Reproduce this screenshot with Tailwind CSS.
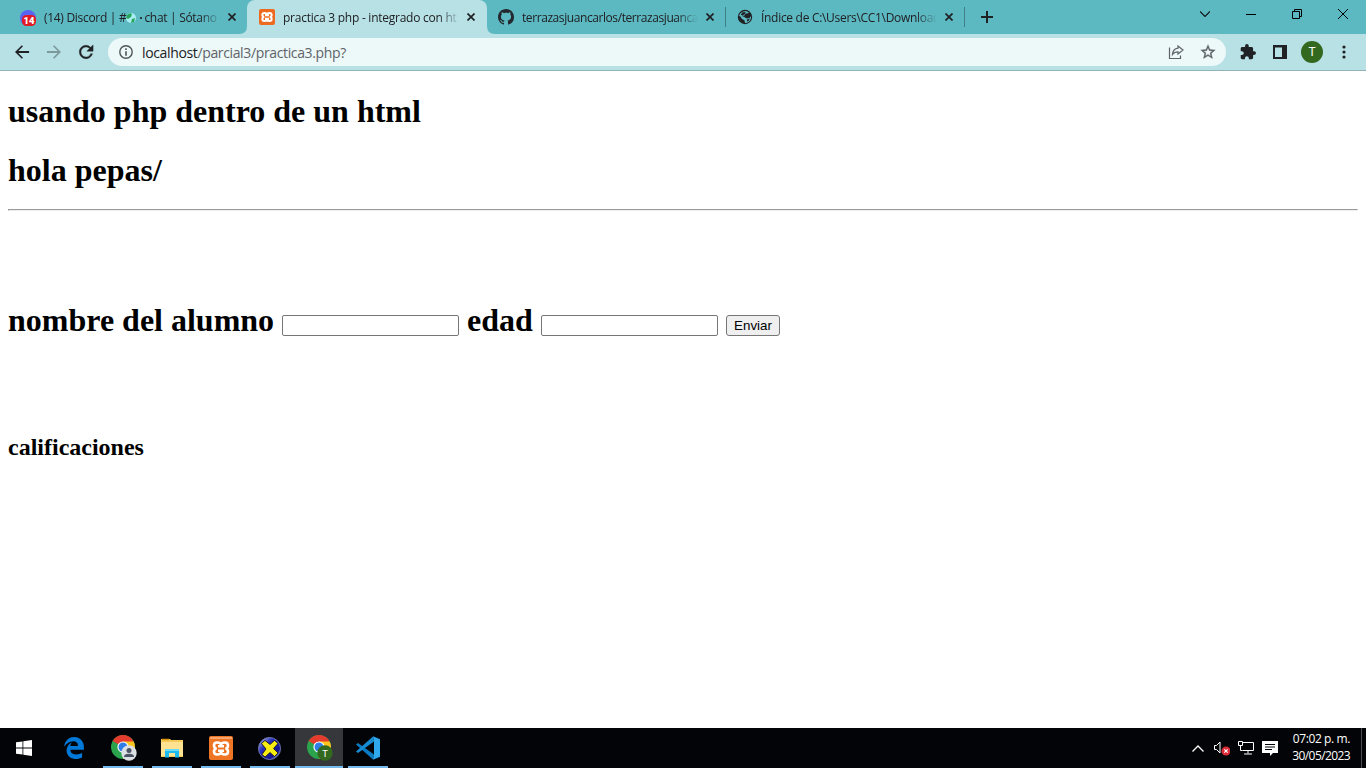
<!DOCTYPE html>
<html lang="es">
<head>
<meta charset="utf-8">
<title>practica 3 php - integrado con html</title>
<script src="https://cdn.jsdelivr.net/npm/@tailwindcss/browser@4"></script>
</head>
<body class="w-[1366px] h-[768px] overflow-hidden flex flex-col bg-white font-['Open_Sans',sans-serif] text-[#202124]">
<!-- tab strip -->
<header class="h-[34px] shrink-0 bg-[#5cb8c1] flex items-start text-[12px]">
  <div class="w-[247px] h-[34px] pl-5 flex items-center relative">
    <svg class="size-4 shrink-0 mt-px" viewBox="0 0 16 16"><circle cx="8" cy="8" r="8" fill="#5865f2"/><rect x="2" y="5" width="14" height="11" rx="4.500" fill="#e01b24"/><text x="9" y="14" font-family="Roboto" font-weight="900" font-size="9.500" text-anchor="middle" fill="#fff">14</text></svg>
    <div class="ml-2 pt-px w-[177px] overflow-hidden whitespace-nowrap tracking-[-0.3px] [mask-image:linear-gradient(to_right,#000_88%,transparent)]">(14) Discord | #<svg class="inline size-[10px] mr-px align-[-1px]" viewBox="0 0 10 10"><circle cx="5" cy="5" r="5" fill="#a9eef2"/><path d="M1 2Q4-1 6 1L5 4 2 6 0 5ZM6 6l3-1-1 4-3 1Z" fill="#26a65b"/></svg><span class="inline-block w-[7px] text-center font-bold">·</span>chat | Sótano d</div>
    <svg class="size-2 ml-[7px] shrink-0" viewBox="0 0 8 8"><path d="M.5.5l7 7M7.500.5l-7 7" stroke="#202124" stroke-width="1.7"/></svg>
  </div>
  <div class="w-[240px] h-[34px] pl-3 flex items-center bg-[#b7e1e5] rounded-t-[8px] relative">
    <svg class="absolute -left-2 bottom-0 size-2" viewBox="0 0 8 8"><path d="M8 0v8H0Q8 8 8 0" fill="#b7e1e5"/></svg>
    <svg class="absolute -right-2 bottom-0 size-2" viewBox="0 0 8 8"><path d="M0 0v8h8Q0 8 0 0" fill="#b7e1e5"/></svg>
    <svg class="size-4 shrink-0" viewBox="0 0 24 24"><rect width="24" height="24" rx="3" fill="#ec6b20"/><path d="M8 6Q12 6 12 9 12 6 16 6 19 6 19 9 19 12 16 12 19 12 19 15 19 18 16 18 12 18 12 15 12 18 8 18 5 18 5 15 5 12 8 12 5 12 5 9 5 6 8 6ZM9 9.500H15M9 14.500H15" fill="none" stroke="#fff" stroke-width="2.900"/></svg>
    <div class="ml-2 pt-px w-[177px] overflow-hidden whitespace-nowrap tracking-[-0.25px] [mask-image:linear-gradient(to_right,#000_88%,transparent)]">practica 3 php - integrado con ht</div>
    <svg class="size-2 ml-[7px] shrink-0" viewBox="0 0 8 8"><path d="M.5.5l7 7M7.500.5l-7 7" stroke="#202124" stroke-width="1.700"/></svg>
  </div>
  <div class="w-[239px] h-[34px] pl-[11px] flex items-center">
    <svg class="size-4 shrink-0" viewBox="0 0 16 16" fill="#24292f"><path d="M8 0C3.580 0 0 3.580 0 8c0 3.540 2.290 6.530 5.470 7.590.4.070.55-.17.55-.38 0-.19-.01-.82-.01-1.490-2.010.37-2.530-.49-2.690-.94-.09-.23-.48-.94-.82-1.130-.28-.15-.68-.52-.01-.53.63-.01 1.080.58 1.230.82.72 1.210 1.870.87 2.330.66.070-.52.28-.87.51-1.070-1.780-.2-3.640-.89-3.640-3.950 0-.87.31-1.590.82-2.150-.08-.2-.36-1.020.08-2.120 0 0 .67-.21 2.200.82.64-.18 1.320-.27 2-.27s1.360.09 2 .27c1.530-1.040 2.200-.82 2.200-.82.44 1.100.16 1.920.08 2.120.51.56.82 1.270.82 2.150 0 3.070-1.870 3.750-3.650 3.950.29.25.54.73.54 1.480 0 1.070-.01 1.930-.01 2.200 0 .21.15.46.55.38A8.010 8.010 0 0 0 16 8c0-4.420-3.580-8-8-8"/></svg>
    <div class="ml-2 pt-px w-[176px] overflow-hidden whitespace-nowrap tracking-[-0.42px] [mask-image:linear-gradient(to_right,#000_88%,transparent)]">terrazasjuancarlos/terrazasjuanca</div>
    <svg class="size-2 ml-[8px] shrink-0" viewBox="0 0 8 8"><path d="M.5.5l7 7M7.500.5l-7 7" stroke="#202124" stroke-width="1.700"/></svg>
    <i class="ml-auto w-px h-5 bg-[#3f7f86]"></i>
  </div>
  <div class="w-[239px] h-[34px] pl-[11px] flex items-center">
    <svg class="size-4 shrink-0" viewBox="0 0 16 16"><circle cx="8" cy="8" r="7.200" fill="#202124"/><path d="M5.500 2.800L9 1.900 12 3.500 10.500 4.500 8.500 4.500 7.500 6.500 5 7 7.500 8 9.500 9.500 12.500 9 14 7Q14.500 12 10 13.800L8 14 7.500 11.500 4.500 9.500 3.500 7.500 2 7Q2.500 4.200 5.500 2.800Z" fill="#5cb8c1"/><path d="M5 3.500L8.500 3 8 5 5.500 6.500 4 6ZM10 10.500L13 9.500 11.500 12 10 12.500Z" fill="#202124"/></svg>
    <div class="ml-[8px] pt-px w-[176px] overflow-hidden whitespace-nowrap tracking-[-0.3px] [mask-image:linear-gradient(to_right,#000_88%,transparent)]">Índice de C:\Users\CC1\Downloads</div>
    <svg class="size-2 ml-[8px] shrink-0" viewBox="0 0 8 8"><path d="M.5.5l7 7M7.500.5l-7 7" stroke="#202124" stroke-width="1.700"/></svg>
    <i class="ml-auto w-px h-5 bg-[#3f7f86]"></i>
  </div>
  <svg class="size-3 ml-4 mt-[11px]" viewBox="0 0 12 12"><path d="M6 0v12M0 6h12" stroke="#202124" stroke-width="2"/></svg>
  <div class="ml-auto flex h-7 items-center pr-[18px] gap-9">
    <svg class="w-[10px] h-[6px]" viewBox="0 0 10 6"><path d="M0 .5l5 5 5-5" fill="none" stroke="#111" stroke-width="1.100"/></svg>
    <svg class="w-[10px] h-px" viewBox="0 0 10 1"><path d="M0 0h10v1H0z"/></svg>
    <svg class="size-[10px]" viewBox="0 0 10 10"><path d="M.5 2.500h7v7h-7zM2.500 2.500v-2h7v7h-2" fill="none" stroke="#000"/></svg>
    <svg class="size-[10px]" viewBox="0 0 10 10"><path d="M0 0l10 10M10 0L0 10" stroke="#000"/></svg>
  </div>
</header>
<!-- toolbar -->
<nav class="h-[37px] shrink-0 bg-[#b7e1e5] border-b border-[#92b4b7] flex items-center pl-[12px]">
  <svg class="size-5" viewBox="0 0 24 24" fill="#202124"><path d="M20.500 10.800H7.600l5.600-5.600L11.800 3.800 3.600 12l8.200 8.200 1.400-1.400-5.600-5.600h12.900z"/></svg>
  <svg class="size-5 ml-3" viewBox="0 0 24 24" fill="#7d999c"><path d="M3.500 10.800h12.900l-5.600-5.600 1.400-1.400 8.200 8.200-8.200 8.200-1.400-1.400 5.600-5.600H3.500z"/></svg>
  <svg class="size-5 ml-3" viewBox="0 0 24 24" fill="#202124"><path d="M17.650 6.350A7.960 7.960 0 0 0 12 4c-4.420 0-8 3.580-8 8s3.580 8 8 8c3.730 0 6.840-2.550 7.730-6h-2.080A5.990 5.990 0 0 1 12 18c-3.310 0-6-2.690-6-6s2.690-6 6-6c1.660 0 3.140.69 4.220 1.780L13 11h7.500V3.500z" stroke="#202124" stroke-width=".5"/></svg>
  <div class="ml-3 w-[1118px] h-7 rounded-full bg-[#edf8f8] flex items-center pl-[11px] pr-[10px]">
    <svg class="size-[14px]" viewBox="0 0 14 14"><circle cx="7" cy="7" r="6.200" fill="none" stroke="#4f5558" stroke-width="1.400"/><path d="M6.200 3.300h1.600v1.600H6.200zM6.200 6.200h1.600v4.500H6.200z" fill="#4f5558"/></svg>
    <div class="ml-[9px] text-[14px] tracking-[-0.36px] whitespace-nowrap text-[#5f6368]"><span class="text-[#202124]">localhost</span>/parcial3/practica3.php?</div>
    <svg class="ml-auto size-4" viewBox="0 0 16 16" fill="none" stroke="#5f6368" stroke-width="1.200"><path d="M1.500 3.500v11h11v-3M10 2l5 4-5 4V7.800Q6.500 7.800 4.500 10.500 5 4.800 10 4.200Z"/></svg>
    <svg class="ml-4 size-4" viewBox="1 1 22 22" fill="#5f6368" stroke="#5f6368" stroke-width=".5"><path d="M22 9.240l-7.190-.62L12 2 9.190 8.630 2 9.240l5.460 4.730L5.820 21 12 17.270 18.180 21l-1.630-7.030L22 9.240zM12 15.400l-3.760 2.270 1-4.280-3.320-2.880 4.380-.38L12 6.100l1.710 4.040 4.380.38-3.320 2.880 1 4.280L12 15.400z"/></svg>
  </div>
  <svg class="ml-[14px] size-4" viewBox="1 1 22 22" fill="#202124"><path d="M20.500 11H19V7c0-1.100-.9-2-2-2h-4V3.500a2.500 2.500 0 0 0-5 0V5H4c-1.100 0-1.990.9-1.990 2v3.800H3.500c1.490 0 2.700 1.210 2.700 2.700s-1.210 2.700-2.700 2.700H2V20c0 1.100.9 2 2 2h3.800v-1.500c0-1.490 1.210-2.700 2.700-2.700s2.700 1.210 2.700 2.700V22H17c1.100 0 2-.9 2-2v-4h1.500a2.500 2.500 0 0 0 0-5z"/></svg>
  <svg class="ml-[17px] size-[14px]" viewBox="0 0 14 14"><path d="M0 0h14v14H0zM2 2.500v9.500h7V2.500z" fill="#202124" fill-rule="evenodd"/></svg>
  <div class="ml-[14px] size-[22px] rounded-full bg-[#33691e] text-white text-[12px] font-[Roboto] flex items-center justify-center">T</div>
  <svg class="ml-[19px] w-[4px] h-[14px]" viewBox="0 0 4 14" fill="#202124"><circle cx="2" cy="2" r="1.600"/><circle cx="2" cy="7" r="1.600"/><circle cx="2" cy="12" r="1.600"/></svg>
</nav>
<!-- document -->
<main class="h-[657px] shrink-0 px-2 pt-[22px] font-['Liberation_Serif',serif] text-black">
  <h1 class="text-[32px] leading-[37px] font-bold">usando php dentro de un html</h1>
  <h1 class="mt-[22px] text-[32px] leading-[37px] font-bold">hola pepas/</h1>
  <hr class="mt-[20px] h-[2px] border border-t-[#9a9a9a] border-l-[#9a9a9a] border-b-[#eee] border-r-[#eee]">
  <form class="mt-[91px] h-[37px] flex items-start text-[32px] leading-[37px] font-bold whitespace-nowrap" onsubmit="return false">
    <label for="n" class="w-[274px]">nombre del alumno</label>
    <input id="n" class="w-[177px] h-[21px] mt-[13px] border border-[#767676] rounded-[2px] bg-white">
    <label for="e" class="ml-2 w-[74px]">edad</label>
    <input id="e" class="w-[177px] h-[21px] mt-[13px] border border-[#767676] rounded-[2px] bg-white">
    <button class="ml-2 mt-[13px] w-[54px] h-[21px] border border-[#767676] rounded-[3px] bg-[#efefef] font-['Liberation_Sans',sans-serif] font-normal text-[13.333px] leading-[19px]">Enviar</button>
  </form>
  <h2 class="mt-[95px] text-[24px] leading-[27px] font-bold">calificaciones</h2>
</main>
<!-- taskbar -->
<footer class="h-10 shrink-0 bg-[#020408] flex text-white">
  <div class="w-12 flex items-center justify-center"><svg class="size-4" viewBox="0 0 16 16" fill="#fff"><path d="M0 2.300L6.500 1.400V7.600H0zM7.300 1.300L16 0V7.600H7.300zM0 8.400H6.500V14.600L0 13.700zM7.300 8.400H16V16L7.300 14.700z"/></svg></div>
  <div class="w-[51px] flex items-center justify-center pr-px pl-px"><svg class="w-5 h-[22px]" viewBox="24 6 464 498" preserveAspectRatio="none" fill="#0078d7"><path d="M25.714 228.163c.111-.162.23-.323.342-.485-.021.162-.045.323-.065.485h-.277zm460.572 15.508c0-44.032-7.754-84.465-28.801-122.405C416.498 47.879 343.912 8.001 258.893 8.001 118.962 7.724 40.617 113.214 26.056 227.679c42.429-61.312 117.073-121.376 220.375-124.966 0 0 109.666 0 99.419 104.957H169.997c6.369-37.386 18.554-58.986 34.339-78.926-75.049 34.893-121.850 96.096-120.742 188.315.83 71.448 50.124 144.836 120.743 171.976 83.357 31.847 192.776 7.200 240.132-21.324V363.307c-80.864 56.494-270.871 60.925-272.255-67.572h314.073v-52.064z"/></svg></div>
  <div class="w-[50px] flex flex-col items-start pl-1">
    <div class="h-[38px] w-10 flex items-center pl-[7px]"><svg class="w-7 h-7 mt-1" viewBox="0 0 28 28"><circle cx="13" cy="12" r="12" fill="#2ba24c"/><path d="M13 12L2.600 6A12 12 0 0 1 23.400 6L18 12Z" fill="#e33b2e"/><path d="M13 6.500H23.700A12 12 0 0 1 13 24L18 14.500Z" fill="#fcc31e"/><circle cx="13" cy="12" r="5.600" fill="#fff"/><circle cx="13" cy="12" r="4.500" fill="#2f7de9"/><circle cx="19" cy="18" r="7.700" fill="#dcdfe4"/><circle cx="19" cy="15.500" r="2.500" fill="#4a5363"/><path d="M14 22Q14 18.800 19 18.800T24 22Z" fill="#4a5363"/></svg></div>
    <i class="w-10 h-[2px] bg-[#76b9ed]"></i>
  </div>
  <div class="w-[46px] flex flex-col items-center">
    <div class="h-[38px] flex items-center"><svg class="w-[22px] h-5 mt-0.5" viewBox="0 0 22 20"><path d="M0 1h9l1 1h12v17H0z" fill="#f5cc5b"/><path d="M1 1.500h7" stroke="#d9940c" stroke-width="1.500"/><path d="M0 4h22v14H0z" fill="#fde391"/><path d="M4 11h14v8.500h-4V15H8v4.500H4z" fill="#1fbbee"/><path d="M4 11h14v2H4z" fill="#6edbf5"/></svg></div>
    <i class="w-10 h-[2px] bg-[#76b9ed]"></i>
  </div>
  <div class="w-[52px] flex flex-col items-center">
    <div class="h-[38px] flex items-center"><svg class="size-6 mt-0.5" viewBox="0 0 24 24"><rect width="24" height="24" rx="2" fill="#ee7524"/><path d="M1 1h22v2H1z" fill="#f5a56d"/><path d="M8 6.500Q12 6.500 12 9 12 6.500 16 6.500 19 6.500 19 9.500 19 12 16.500 12.500 19 13 19 15.500 19 18.500 16 18.500 12 18.500 12 16 12 18.500 8 18.500 5 18.500 5 15.500 5 13 7.500 12.500 5 12 5 9.500 5 6.500 8 6.500ZM9 10.200H15M9 14.800H15" fill="none" stroke="#fff" stroke-width="2.600"/></svg></div>
    <i class="w-10 h-[2px] bg-[#76b9ed]"></i>
  </div>
  <div class="w-[48px] flex flex-col items-start pl-[3px]">
    <div class="h-[38px] w-10 flex items-center justify-center pr-[2px]"><svg class="w-[23px] h-[23px] mt-0.5" viewBox="0 0 23 23"><defs><linearGradient id="g" x1="0" y1="0" x2="1" y2="1"><stop offset="0" stop-color="#ccd0ee"/><stop offset=".35" stop-color="#2730bb"/><stop offset=".75" stop-color="#141494"/><stop offset="1" stop-color="#d9dcf2"/></linearGradient></defs><circle cx="11.500" cy="11.500" r="11" fill="url(#g)" stroke="#6f78ae"/><path d="M3.500 6.500l3.500-3 5 4 4.500-4 3.500 3-4.500 5 4.500 4.500-3.500 3.500-4.500-4-5 4.500-3-2.500 4-5.500z" fill="#f7ed12" stroke="#111" stroke-width=".8"/></svg></div>
    <i class="w-10 h-[2px] bg-[#76b9ed]"></i>
  </div>
  <div class="w-[48px] flex flex-col bg-[#35373b]">
    <div class="h-[38px] w-full flex items-center pl-[11px]"><svg class="w-7 h-7 mt-1" viewBox="0 0 28 28"><circle cx="13" cy="12" r="12" fill="#2ba24c"/><path d="M13 12L2.600 6A12 12 0 0 1 23.400 6L18 12Z" fill="#e33b2e"/><path d="M13 6.500H23.700A12 12 0 0 1 13 24L18 14.500Z" fill="#fcc31e"/><circle cx="13" cy="12" r="5.600" fill="#fff"/><circle cx="13" cy="12" r="4.500" fill="#2f7de9"/><circle cx="19" cy="18" r="7.700" fill="#33691e"/><text x="19" y="21.500" text-anchor="middle" font-family="Roboto" font-size="9.500" fill="#fff">T</text></svg></div>
    <i class="w-full h-[2px] bg-[#76b9ed]"></i>
  </div>
  <div class="w-[50px] flex flex-col items-center">
    <div class="h-[38px] flex items-center"><svg class="size-6 mt-0.5" viewBox="0 0 24 24"><path d="M0 8.500L2 7l16 11.500-1 5z" fill="#0a7ac2"/><path d="M0 15.500L2 17 18 5.500 17 .5z" fill="#168bd2"/><path d="M17 .3L24 3.200V20.800L17 23.700 18 18V6z" fill="#2fa8ee"/></svg></div>
    <i class="w-10 h-[2px] bg-[#76b9ed]"></i>
  </div>
  <div class="ml-auto flex items-center">
    <svg class="w-3 h-[7px]" viewBox="0 0 12 7"><path d="M.5 6.500L6 1l5.500 5.500" fill="none" stroke="#fff" stroke-width="1.300"/></svg>
    <svg class="ml-[10px] w-4 h-4" viewBox="0 0 16 16"><path d="M.5 5.500h2l3.500-3.500v11l-3.500-3.500H.5z" fill="none" stroke="#fff"/><circle cx="12" cy="11" r="4.500" fill="#dd2c38"/><path d="M10.300 9.300l3.400 3.400M13.700 9.300l-3.400 3.400" stroke="#fff" stroke-width="1.200"/></svg>
    <svg class="ml-[8px] w-4 h-[14px]" viewBox="0 0 16 14" fill="none" stroke="#fff"><path d="M4.500 1.500h11v8h-11M.5.500h4v4h-4zM2.500 4.500v5h2M10 9.500v3M6 13h8"/></svg>
    <svg class="ml-2 w-4 h-[17px]" viewBox="0 0 16 17"><path d="M0 1h16v12h-5l-3 3v-3H0z" fill="#fff"/><path d="M3 4.500h10M3 7h10M3 9.500h7" stroke="#020408"/></svg>
    <div class="ml-[14px] w-[58px] -mt-0.5 text-[12px] leading-[17px] whitespace-nowrap flex flex-col items-end"><span class="tracking-[-0.4px]">07:02 p. m.</span><span class="tracking-[-0.6px]">30/05/2023</span></div>
    <i class="ml-[11px] mr-1 w-px h-10 bg-[#4b4d51]"></i>
  </div>
</footer>
</body>
</html>
